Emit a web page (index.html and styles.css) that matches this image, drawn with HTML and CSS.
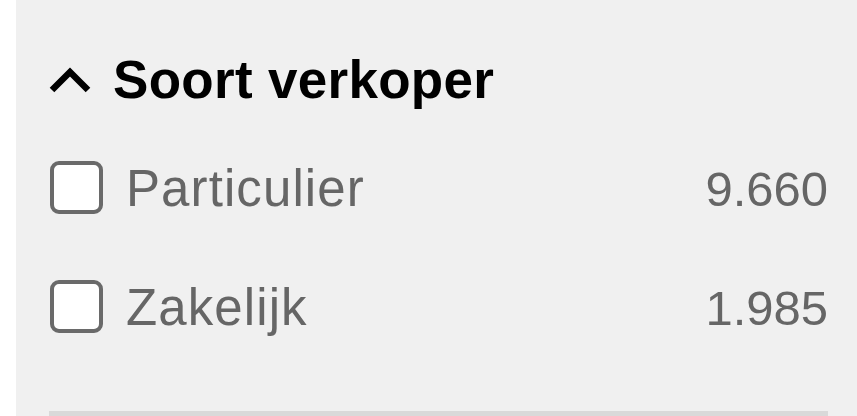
FILE: index.html
```html
<!DOCTYPE html>
<html lang="nl">
<head>
<meta charset="utf-8">
<title>Soort verkoper</title>
<link rel="stylesheet" href="styles.css">
</head>
<body>
<div class="page">
  <div class="gutter"></div>
  <section class="panel">
    <div class="facet-head">
      <svg class="chevron" width="42" height="28" viewBox="0 0 42 28" aria-hidden="true">
        <polyline points="3,24 21,6 39,24" fill="none" stroke="#000" stroke-width="6.5" stroke-linejoin="miter" stroke-linecap="butt"/>
      </svg>
      <h2 class="facet-title">Soort verkoper</h2>
    </div>
    <ul class="options">
      <li class="option">
        <span class="box"></span>
        <span class="label">Particulier</span>
        <span class="count">9.660</span>
      </li>
      <li class="option">
        <span class="box"></span>
        <span class="label">Zakelijk</span>
        <span class="count">1.985</span>
      </li>
    </ul>
    <div class="divider"></div>
  </section>
</div>
</body>
</html>
```

FILE: styles.css
```css
html, body {
  margin: 0;
  padding: 0;
  height: 100%;
  background: #ffffff;
  font-family: "Liberation Sans", Arial, Helvetica, sans-serif;
}

.page {
  display: flex;
  height: 416px;
  overflow: hidden;
}

.gutter {
  width: 16px;
  flex: none;
  background: #ffffff;
}

.panel {
  flex: 1;
  background: #f0f0f0;
  padding: 50px 29px 0 33px;
  display: flex;
  flex-direction: column;
}

.facet-head {
  display: flex;
  align-items: center;
  height: 60px;
}

.chevron {
  flex: none;
  margin-right: 22px;
  margin-top: -1px;
}

.facet-title {
  margin: 0;
  font-size: 53px;
  line-height: 60px;
  font-weight: 700;
  color: #000000;
  letter-spacing: 0.3px;
}

.options {
  list-style: none;
  margin: 51px 0 0 0;
  padding: 0;
  display: flex;
  flex-direction: column;
  gap: 67px;
}

.option {
  display: flex;
  align-items: center;
  height: 52px;
}

.box {
  flex: none;
  width: 45px;
  height: 45px;
  border: 4px solid #6a6a6a;
  border-radius: 9px;
  background: #ffffff;
  margin-left: 1px;
  margin-right: 23px;
}

.label {
  flex: 1;
  font-size: 51px;
  line-height: 52px;
  color: #666666;
  letter-spacing: 1.1px;
  padding-top: 4px;
}

.count {
  flex: none;
  font-size: 49px;
  line-height: 52px;
  color: #666666;
  padding-top: 4px;
}

.divider {
  margin-top: 79px;
  height: 6px;
  background: #d9d9d9;
  flex: none;
}
```
